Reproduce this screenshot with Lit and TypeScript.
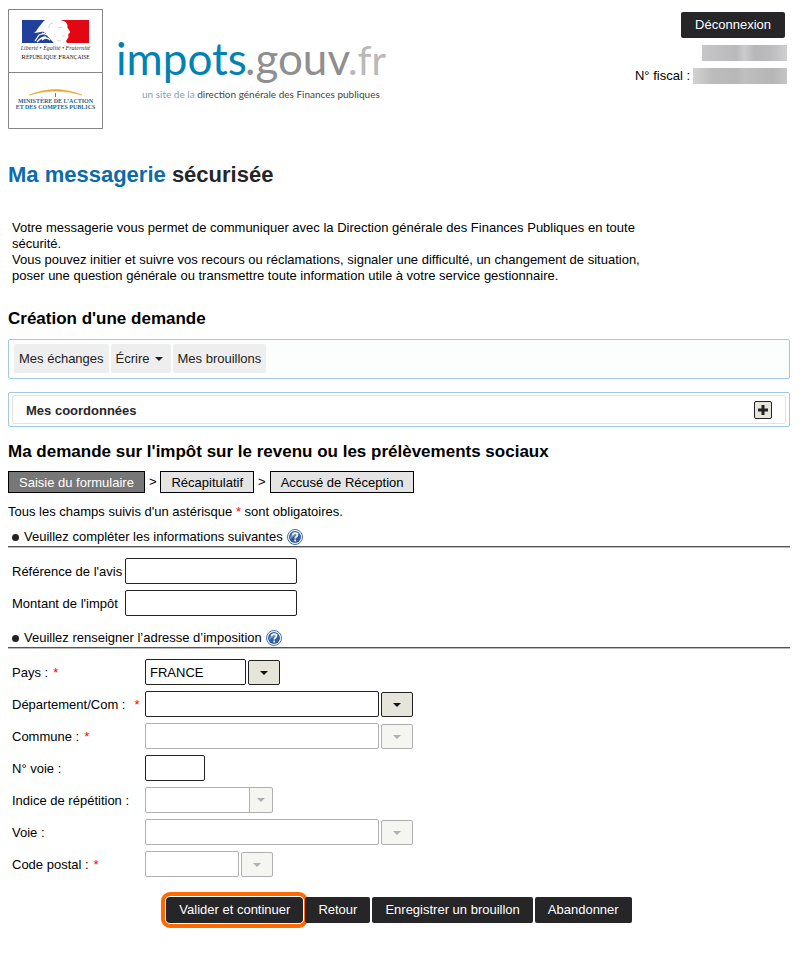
import { LitElement, html, css, nothing } from "lit";
import { customElement } from "lit/decorators.js";
import { classMap } from "lit/directives/class-map.js";

const base = css`
  * { box-sizing: border-box; }
  button, input, select { font: inherit; color: inherit; margin: 0; }
  button { cursor: pointer; }
`;

interface AddressField {
  id: string;
  label: string;
  required?: boolean;
  apart?: boolean;
  kind: "combo" | "text" | "select";
  size: string;
  value?: string;
  disabled?: boolean;
}

const ADDRESS_FIELDS: AddressField[] = [
  { id: "pays", label: "Pays :", required: true, kind: "combo", size: "small", value: "FRANCE" },
  { id: "departement", label: "Département/Com :", required: true, apart: true, kind: "combo", size: "large" },
  { id: "commune", label: "Commune :", required: true, kind: "combo", size: "large", disabled: true },
  { id: "numero", label: "N° voie :", kind: "text", size: "tiny" },
  { id: "indice", label: "Indice de répétition :", kind: "select", size: "menu", disabled: true },
  { id: "voie", label: "Voie :", kind: "combo", size: "large", disabled: true },
  { id: "codepostal", label: "Code postal :", required: true, kind: "combo", size: "code", disabled: true },
];

const caret = html`<svg class="caret" width="8" height="4" viewBox="0 0 8 4" aria-hidden="true"><path d="M0 0H8L4 4Z" fill="currentColor"/></svg>`;

@customElement("site-header")
class SiteHeader extends LitElement {
  static styles = [base, css`
    :host { display: flex; justify-content: space-between; align-items: flex-start; }
    .brand { display: flex; }
    .brand svg { display: block; flex: none; }
    .account { display: flex; flex-direction: column; align-items: flex-end; gap: 7px; padding: 3px 3px 0 0; }
    .logout { height: 26px; padding: 0 14px; margin-right: 2px; border: 0; border-radius: 2px; background: #262629; color: #fff; }
    .line { display: flex; align-items: center; gap: 3px; height: 16px; }
    .mask { height: 16px; width: 85px; background: linear-gradient(90deg, #c6c5c8, #b9b8ba 40%, #cbcbcd 50%, #b7b7b9 62%, #bbbbbd 80%, #cfcfd2); }
    .mask.wide { width: 94px; background: linear-gradient(90deg, #d2d2d3, #bcbcbd 20%, #b8b8b9 45%, #bfbfc0 55%, #b5b5b6 85%, #c5c5c6); }
  `];
  render() {
    return html`
      <div class="brand">
        <svg width="96" height="121" viewBox="0 0 96 121" role="img" aria-label="République Française">
          <path d="M.5 .5H94.5V119.5H.5ZM.5 63.5H94.5" fill="#fff" stroke="#858585"/>
          <path d="M14 11H37C34 13 33 16 31 18C29 20 29 22 26 24C30 24 33 22 36 23L44 30L46 34H14Z" fill="#1f419b"/>
          <path d="M52 11H81V34H59C57 31 60 30 60.500 28C60 27 61 26 60 25C62 24 63 24 61 21C60 19 59 19 59.500 16C58 12 56 12 52 11Z" fill="#e30613"/>
          <path d="M27 32L31 26L37 24M29 33Q33 28 38 28M34 24L39 26M34 31Q38 27 42 31" fill="none" stroke="#fff" stroke-width="1.300"/>
          <path d="M46 34L41 29L38 25L39 22L43 27L49 31L52 34Z" fill="#fff"/>
          <path d="M45 14Q40 15 41 19M50 19L54 18M54 27L57 27M49 31L53 32" fill="none" stroke="#c3c9dc" stroke-width=".8"/>
          <g font-family="Liberation Serif, serif" text-anchor="middle">
            <text x="47.5" y="41" font-size="6" font-style="italic" fill="#333">Liberté • Égalité • Fraternité</text>
            <text x="47.5" y="50" font-size="7" fill="#111">R<tspan font-size="5.500">ÉPUBLIQUE</tspan> F<tspan font-size="5.500">RANÇAISE</tspan></text>
            <text x="47.5" y="94" font-size="6" font-weight="bold" fill="#23648b">MINISTÈRE DE L’ACTION</text>
            <text x="47.5" y="100" font-size="6" font-weight="bold" fill="#23648b">ET DES COMPTES PUBLICS</text>
          </g>
          <path d="M21 86Q47 75 74 86Q47 78 21 86Z" fill="#e5a82d" stroke="#e5a82d" stroke-width=".6"/>
          <path d="M47.500 84V88" stroke="#4d82a0"/>
        </svg>
        <svg width="290" height="121" viewBox="0 0 290 121" role="img" aria-label="impots.gouv.fr">
          <g font-family="Lato, sans-serif">
            <g font-size="44">
              <text x="12" y="66" fill="#0083b3">impots</text>
              <text x="141" y="66" fill="#8f8f8f">.gouv</text>
              <text x="244" y="66" font-size="40" fill="#b9b9b9">.fr</text>
            </g>
            <text x="38" y="89" font-size="10" fill="#7ba0c0">un site de la <tspan fill="#444">direction générale des Finances publiques</tspan></text>
          </g>
        </svg>
      </div>
      <div class="account">
        <button class="logout" type="button">Déconnexion</button>
        <div class="line"><span class="mask"></span></div>
        <div class="line"><span>N° fiscal :</span><span class="mask wide"></span></div>
      </div>`;
  }
}

@customElement("section-title")
class SectionTitle extends LitElement {
  static styles = [base, css`
    :host { display: flex; align-items: center; height: 19px; padding-left: 4px; border-bottom: 1px solid #555; box-shadow: 0 1px #bbb; }
    .dot { width: 7px; height: 7px; border-radius: 50%; background: #222; margin-right: 5px; }
    .help { display: flex; padding: 0; border: 0; background: none; margin-left: 4px; }
  `];
  render() {
    return html`<span class="dot"></span><slot></slot>
      <button class="help" type="button" aria-label="Aide">
        <svg width="16" height="16" viewBox="0 0 16 16">
          <circle cx="8" cy="8" r="7.500" fill="#fff" stroke="#4670a8"/>
          <circle cx="8" cy="8" r="6" fill="#2f5c9c"/>
          <path d="M3 10A6 6 0 0 1 13 5Q8 6 3 10Z" fill="#6f93c3"/>
          <path d="M5.700 6.200Q5.800 4 8.100 4Q10.400 4 10.400 6Q10.400 7 9.300 7.800Q8.200 8.500 8.200 9.600" fill="none" stroke="#fff" stroke-width="1.700"/>
          <rect x="7.300" y="10.600" width="1.800" height="1.800" fill="#fff"/>
        </svg>
      </button>`;
  }
}

@customElement("app-root")
class AppRoot extends LitElement {
  static styles = [base, css`
    :host { display: block; box-sizing: border-box; padding: 9px 17px 24px 8px; background: #fff; color: #000; font: 13px/16px "Liberation Sans", Arial, sans-serif; }
    h1, h2, p { margin: 0; }
    h1 { margin-top: 32px; font-size: 22px; line-height: 26px; color: #262629; }
    h1 .accent { color: #0b6bab; }
    .intro { max-width: 640px; margin: 32px 0 25px; padding-left: 4px; }
    h2 { font-size: 17px; line-height: 20px; }
    .nav { display: flex; gap: 2px; height: 40px; margin-top: 10px; padding: 4px 5px; border: 1px solid #9fc9e3; border-radius: 2px; background: #fcfefe; }
    .nav button { display: flex; align-items: center; gap: 5px; height: 29px; padding: 0 5px; border: 0; border-radius: 2px; background: #eee; color: #222; }
    .nav .menu { padding-right: 8px; }
    .panel { margin: 13px 0 15px; padding: 2px 3px; border: 1px solid #9fc9e3; border-radius: 2px; }
    .panel-head { display: flex; align-items: center; justify-content: space-between; height: 29px; padding: 0 13px; border: 1px solid #e4e4d8; border-radius: 2px; font-weight: bold; color: #262629; }
    .panel-head span { padding-top: 2px; }
    .plus { display: grid; place-items: center; width: 18px; height: 18px; padding: 0; border: 1px solid #222; border-radius: 2px; background: #e5e5da; color: #222; }
    .steps { display: flex; align-items: center; gap: 4px; margin: 9px 0 11px; }
    .step { height: 22px; padding: 3px 10px 1px; border: 1px solid #000; background: #e4e4e4; }
    .step.current { background: #777; color: #fff; }
    .req { color: #f00; }
    .note { margin-bottom: 8px; }
    .fields { display: grid; gap: 6px; padding: 11px 0 13px 4px; }
    .row { display: flex; align-items: center; height: 26px; }
    .row label { width: 113px; padding-top: 2px; }
    .address .row label { width: 133px; }
    .address .req { margin-left: 5px; }
    .address .apart { margin-left: 9px; }
    input, select { height: 26px; padding: 0 4px; border: 1px solid #222; border-radius: 2px; background: #fff; }
    .ref { width: 172px; }
    .small { width: 101px; }
    .large { width: 234px; }
    .tiny { width: 60px; }
    .code { width: 94px; }
    .menu-box { display: grid; grid-template-columns: 104px 24px; color: #b0b0b0; }
    .menu-box select { grid-area: 1 / 1 / 2 / 3; appearance: none; opacity: 1; background: linear-gradient(#b0b0b0, #b0b0b0) 103px 0 / 1px 100% no-repeat, linear-gradient(90deg, #fff 103px, #f5f6f1 103px); }
    .menu-box .caret { grid-area: 1 / 2; place-self: center; z-index: 1; pointer-events: none; }
    .drop { display: grid; place-items: center; align-self: flex-end; width: 32px; height: 25px; margin-left: 2px; padding: 0; border: 1px solid #222; border-radius: 2px; background: #e5e5da; color: #111; }
    .off input, .off select, .off .drop { border-color: #b0b0b0; color: #b0b0b0; }
    .off .drop { background: #f5f6f1; }
    .actions { display: flex; justify-content: center; gap: 2px; margin-top: 7px; }
    .actions button { height: 26px; padding: 0 13px; border: 0; border-radius: 2px; background: #262629; color: #fff; white-space: nowrap; }
    .actions .main { outline: 4px solid #ff6a00; outline-offset: 1px; border-radius: 4px; }
  `];

  private control(f: AddressField) {
    const off = !!f.disabled;
    if (f.kind === "select") {
      return html`<span class="menu-box"><select id=${f.id} ?disabled=${off}><option></option></select>${caret}</span>`;
    }
    return html`<input id=${f.id} class=${f.size} type="text" .value=${f.value ?? ""} ?disabled=${off}>
      ${f.kind === "combo" ? html`<button class="drop" type="button" aria-label="Ouvrir la liste" ?disabled=${off}>${caret}</button>` : nothing}`;
  }

  render() {
    return html`
      <site-header></site-header>
      <h1><span class="accent">Ma messagerie</span> sécurisée</h1>
      <p class="intro">Votre messagerie vous permet de communiquer avec la Direction générale des Finances Publiques en toute sécurité.<br>Vous pouvez initier et suivre vos recours ou réclamations, signaler une difficulté, un changement de situation, poser une question générale ou transmettre toute information utile à votre service gestionnaire.</p>
      <h2>Création d'une demande</h2>
      <nav class="nav">
        <button type="button">Mes échanges</button>
        <button type="button" class="menu">Écrire ${caret}</button>
        <button type="button">Mes brouillons</button>
      </nav>
      <section class="panel">
        <div class="panel-head"><span>Mes coordonnées</span>
          <button class="plus" type="button" aria-label="Afficher"><svg width="10" height="10" viewBox="0 0 10 10"><path d="M5 0V10M0 5H10" stroke="currentColor" stroke-width="3"/></svg></button>
        </div>
      </section>
      <h2>Ma demande sur l'impôt sur le revenu ou les prélèvements sociaux</h2>
      <div class="steps">
        <span class="step current">Saisie du formulaire</span><span>&gt;</span>
        <span class="step">Récapitulatif</span><span>&gt;</span>
        <span class="step">Accusé de Réception</span>
      </div>
      <form @submit=${(e: Event) => e.preventDefault()}>
        <p class="note">Tous les champs suivis d'un astérisque <span class="req">*</span> sont obligatoires.</p>
        <section-title>Veuillez compléter les informations suivantes</section-title>
        <div class="fields">
          <div class="row"><label for="reference">Référence de l'avis</label><input id="reference" class="ref" type="text"></div>
          <div class="row"><label for="montant">Montant de l'impôt</label><input id="montant" class="ref" type="text"></div>
        </div>
        <section-title>Veuillez renseigner l’adresse d’imposition</section-title>
        <div class="fields address">
          ${ADDRESS_FIELDS.map(f => html`<div class=${classMap({ row: true, off: !!f.disabled })}>
            <label for=${f.id}>${f.label}${f.required ? html`<span class=${classMap({ req: true, apart: !!f.apart })}>*</span>` : nothing}</label>${this.control(f)}
          </div>`)}
        </div>
        <div class="actions">
          <button class="main" type="submit">Valider et continuer</button>
          <button type="button">Retour</button>
          <button type="button">Enregistrer un brouillon</button>
          <button type="button">Abandonner</button>
        </div>
      </form>`;
  }
}
